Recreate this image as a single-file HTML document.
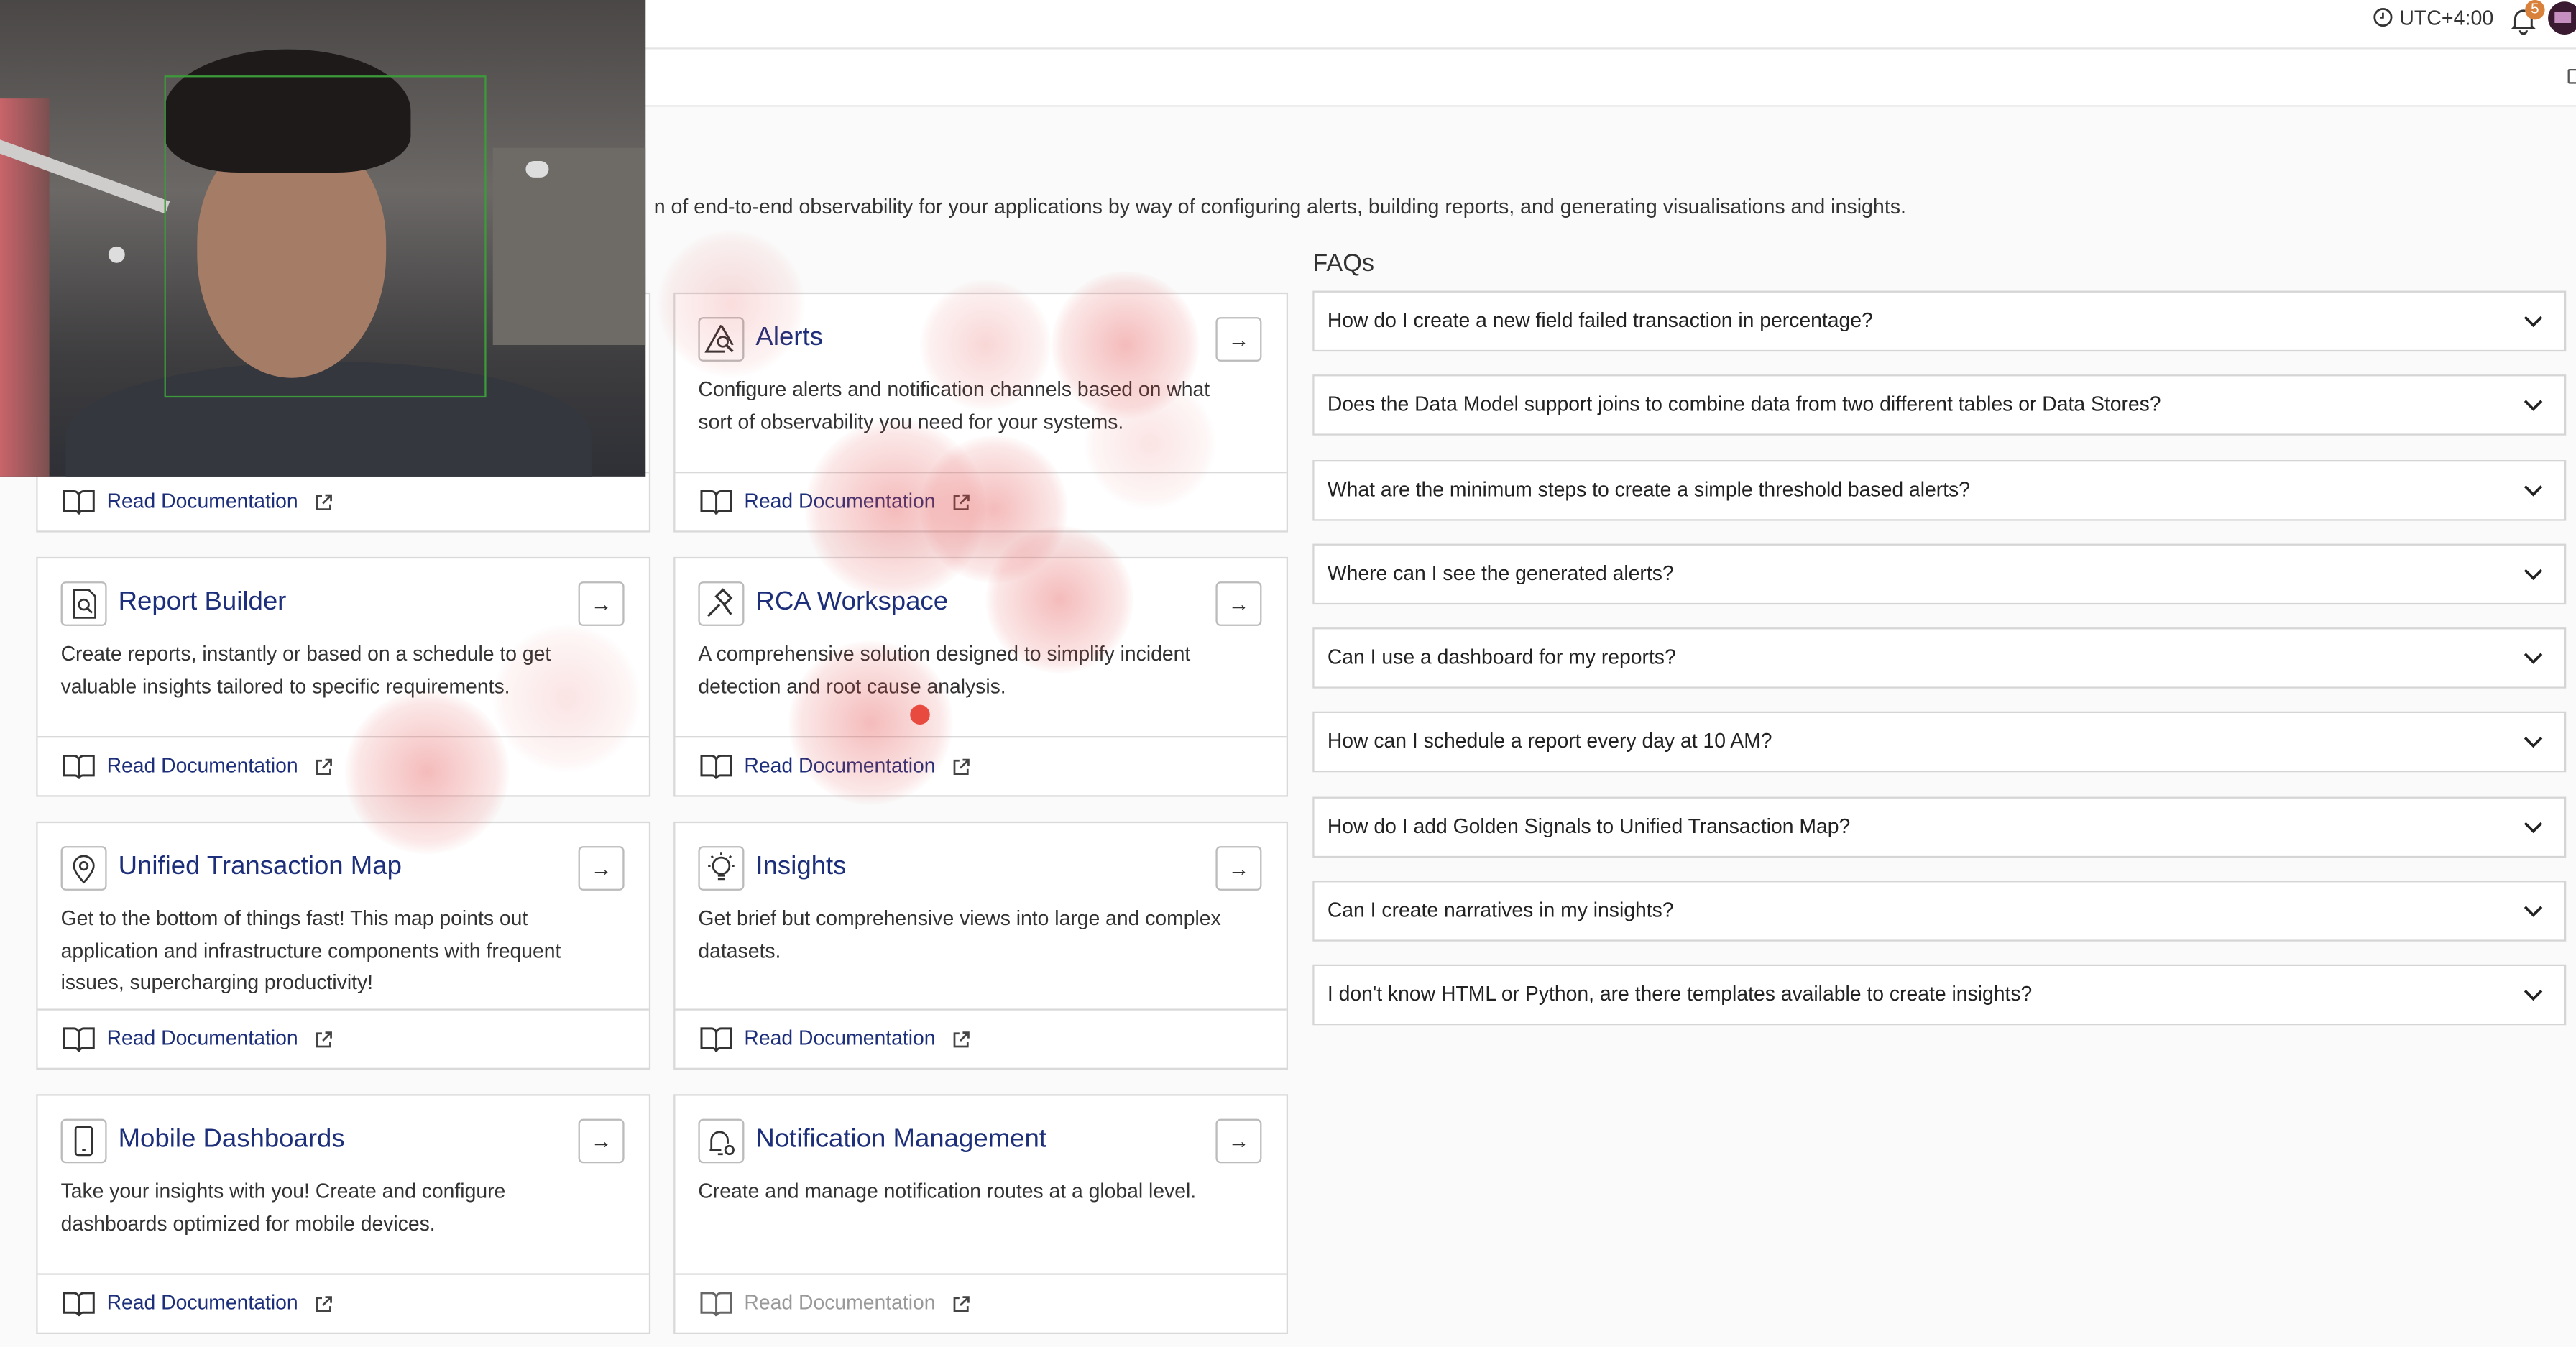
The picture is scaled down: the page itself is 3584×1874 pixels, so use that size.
<!DOCTYPE html>
<html><head><meta charset="utf-8">
<style>
*{box-sizing:border-box;margin:0;padding:0}
html,body{width:3584px;height:1874px;overflow:hidden;background:#fafafa}
#w{position:absolute;left:0;top:0;width:1568px;height:820px;transform:scale(2.28571);transform-origin:0 0;font-family:"Liberation Sans",sans-serif;color:#333;background:#fafafa}
.top{position:absolute;left:0;top:0;width:1568px;height:30px;background:#fff;border-bottom:1.5px solid #e4e4e4}
.sub{position:absolute;left:0;top:30px;width:1568px;height:35px;background:#fff;border-bottom:1.5px solid #e6e6e6}
.card{position:absolute;width:374px;background:#fff;border:1px solid #d9d9d9}
.card .ic{position:absolute;left:14px;top:14px;width:28px;height:27px;border:1px solid #bbb;border-radius:3px;background:#fff}
.card .t{position:absolute;left:49px;top:18px;font-size:16px;color:#1d2f7a}
.card .ar{position:absolute;right:15px;top:14px;width:28px;height:27px;border:1px solid #bbb;border-radius:3px;text-align:center;line-height:25px;font-size:13px;color:#333}
.card .d{position:absolute;left:14px;top:49px;right:30px;font-size:12.4px;line-height:19.5px;color:#333}
.card .f{position:absolute;left:0;right:0;bottom:0;height:36px;border-top:1px solid #d9d9d9}
.card .f .bk{position:absolute;left:15px;top:9px}
.card .f span{position:absolute;left:42px;top:10px;font-size:12.4px;color:#1d2f7a}
.card .f .ex{position:absolute;left:168px;top:12px}
.faq{position:absolute;left:799px;width:763px;height:37px;background:#fff;border:1px solid #d5d5d5;font-size:12.4px;color:#222;padding:10px 0 0 8px}
.faq svg{position:absolute;right:12px;top:13px}
.blob{position:absolute;border-radius:50%;background:radial-gradient(circle,rgba(225,60,60,.35),rgba(225,60,60,.12) 60%,rgba(225,60,60,0) 72%)}
</style></head><body><div id="w">
<div class="top"></div>
<div style="position:absolute;left:1444px;top:4px;font-size:12.5px;color:#333">
<svg width="13" height="13" viewBox="0 0 14 14" style="vertical-align:-2px"><circle cx="7" cy="7" r="5.5" fill="none" stroke="#333" stroke-width="1.3"/><path d="M7 4v3.2H5" fill="none" stroke="#333" stroke-width="1.3"/></svg> UTC+4:00</div>
<svg style="position:absolute;left:1528px;top:4px" width="16" height="17" viewBox="0 0 16 17"><path d="M3 12V7.5a5 5 0 0 1 10 0V12l1 1H2z M6 14.5a2 2 0 0 0 4 0" fill="none" stroke="#333" stroke-width="1.3"/></svg>
<div style="position:absolute;left:1537px;top:0;width:12px;height:12px;border-radius:6px;background:#d9813b;color:#fff;font-size:9px;text-align:center;line-height:11px">5</div>
<div style="position:absolute;left:1551px;top:1px;width:20px;height:20px;border-radius:10px;background:#3a1a30;overflow:hidden"><div style="margin:6px 0 0 4px;width:10px;height:7px;background:#c58fc0"></div></div>
<div class="sub"></div>
<div style="position:absolute;left:1563px;top:42px;width:6px;height:9px;border:1.3px solid #555;border-radius:1px"></div>

<div style="position:absolute;left:398px;top:119px;font-size:12.5px;color:#333;white-space:nowrap">n of end-to-end observability for your applications by way of configuring alerts, building reports, and generating visualisations and insights.</div>

<div class="card" style="left:22px;top:178px;height:146px"><div class="f"><svg class="bk" width="20" height="18" viewBox="0 0 20 18"><path d="M1 2h6a3 3 0 0 1 3 3v11a2.5 2.5 0 0 0-2.5-2H1z M19 2h-6a3 3 0 0 0-3 3v11a2.5 2.5 0 0 1 2.5-2H19z" fill="none" stroke="#333" stroke-width="1.3"/></svg><span>Read Documentation</span><svg class="ex" width="12" height="12" viewBox="0 0 12 12"><path d="M5 2H2v8h8V7 M7 1.5h3.5V5 M10.5 1.5 5.5 6.5" fill="none" stroke="#444" stroke-width="1.2"/></svg></div></div>
<div class="card" style="left:410px;top:178px;height:146px"><div class="ic"><svg width="26" height="25" viewBox="0 0 26 25"><path d="M13 4 4 20h11 M13 4l7 12" fill="none" stroke="#333" stroke-width="1.3"/><circle cx="14" cy="14" r="3" fill="none" stroke="#333" stroke-width="1.2"/><path d="M16 16l4 4" stroke="#333" stroke-width="1.6"/></svg></div><div class="t">Alerts</div><div class="ar">→</div><div class="d">Configure alerts and notification channels based on what sort of observability you need for your systems.</div><div class="f"><svg class="bk" width="20" height="18" viewBox="0 0 20 18"><path d="M1 2h6a3 3 0 0 1 3 3v11a2.5 2.5 0 0 0-2.5-2H1z M19 2h-6a3 3 0 0 0-3 3v11a2.5 2.5 0 0 1 2.5-2H19z" fill="none" stroke="#333" stroke-width="1.3"/></svg><span>Read Documentation</span><svg class="ex" width="12" height="12" viewBox="0 0 12 12"><path d="M5 2H2v8h8V7 M7 1.5h3.5V5 M10.5 1.5 5.5 6.5" fill="none" stroke="#444" stroke-width="1.2"/></svg></div></div>

<div class="card" style="left:22px;top:339px;height:146px"><div class="ic"><svg width="26" height="25" viewBox="0 0 26 25"><path d="M7 4h9l4 4v13H7z" fill="none" stroke="#333" stroke-width="1.2"/><circle cx="13" cy="13" r="3" fill="none" stroke="#333" stroke-width="1.2"/><path d="M15 15l3 3" stroke="#333" stroke-width="1.3"/></svg></div><div class="t">Report Builder</div><div class="ar">→</div><div class="d">Create reports, instantly or based on a schedule to get valuable insights tailored to specific requirements.</div><div class="f"><svg class="bk" width="20" height="18" viewBox="0 0 20 18"><path d="M1 2h6a3 3 0 0 1 3 3v11a2.5 2.5 0 0 0-2.5-2H1z M19 2h-6a3 3 0 0 0-3 3v11a2.5 2.5 0 0 1 2.5-2H19z" fill="none" stroke="#333" stroke-width="1.3"/></svg><span>Read Documentation</span><svg class="ex" width="12" height="12" viewBox="0 0 12 12"><path d="M5 2H2v8h8V7 M7 1.5h3.5V5 M10.5 1.5 5.5 6.5" fill="none" stroke="#444" stroke-width="1.2"/></svg></div></div>
<div class="card" style="left:410px;top:339px;height:146px"><div class="ic"><svg width="26" height="25" viewBox="0 0 26 25"><path d="M5 20l7-7 M10 8l4-4 5 5-4 4z M14 12l5 7" fill="none" stroke="#333" stroke-width="1.4"/></svg></div><div class="t">RCA Workspace</div><div class="ar">→</div><div class="d">A comprehensive solution designed to simplify incident detection and root cause analysis.</div><div class="f"><svg class="bk" width="20" height="18" viewBox="0 0 20 18"><path d="M1 2h6a3 3 0 0 1 3 3v11a2.5 2.5 0 0 0-2.5-2H1z M19 2h-6a3 3 0 0 0-3 3v11a2.5 2.5 0 0 1 2.5-2H19z" fill="none" stroke="#333" stroke-width="1.3"/></svg><span>Read Documentation</span><svg class="ex" width="12" height="12" viewBox="0 0 12 12"><path d="M5 2H2v8h8V7 M7 1.5h3.5V5 M10.5 1.5 5.5 6.5" fill="none" stroke="#444" stroke-width="1.2"/></svg></div></div>

<div class="card" style="left:22px;top:500px;height:151px"><div class="ic"><svg width="26" height="25" viewBox="0 0 26 25"><path d="M13 21s-6-6-6-10a6 6 0 0 1 12 0c0 4-6 10-6 10z" fill="none" stroke="#333" stroke-width="1.2"/><circle cx="13" cy="11" r="2.3" fill="none" stroke="#333" stroke-width="1.2"/></svg></div><div class="t">Unified Transaction Map</div><div class="ar">→</div><div class="d">Get to the bottom of things fast! This map points out application and infrastructure components with frequent issues, supercharging productivity!</div><div class="f"><svg class="bk" width="20" height="18" viewBox="0 0 20 18"><path d="M1 2h6a3 3 0 0 1 3 3v11a2.5 2.5 0 0 0-2.5-2H1z M19 2h-6a3 3 0 0 0-3 3v11a2.5 2.5 0 0 1 2.5-2H19z" fill="none" stroke="#333" stroke-width="1.3"/></svg><span>Read Documentation</span><svg class="ex" width="12" height="12" viewBox="0 0 12 12"><path d="M5 2H2v8h8V7 M7 1.5h3.5V5 M10.5 1.5 5.5 6.5" fill="none" stroke="#444" stroke-width="1.2"/></svg></div></div>
<div class="card" style="left:410px;top:500px;height:151px"><div class="ic"><svg width="26" height="25" viewBox="0 0 26 25"><circle cx="13" cy="11" r="5" fill="none" stroke="#333" stroke-width="1.2"/><path d="M11 17h4 M11 19h4 M13 3v1.5 M5 11h1.5 M19.5 11H21 M7 5l1 1 M19 5l-1 1" fill="none" stroke="#333" stroke-width="1.2"/></svg></div><div class="t">Insights</div><div class="ar">→</div><div class="d">Get brief but comprehensive views into large and complex datasets.</div><div class="f"><svg class="bk" width="20" height="18" viewBox="0 0 20 18"><path d="M1 2h6a3 3 0 0 1 3 3v11a2.5 2.5 0 0 0-2.5-2H1z M19 2h-6a3 3 0 0 0-3 3v11a2.5 2.5 0 0 1 2.5-2H19z" fill="none" stroke="#333" stroke-width="1.3"/></svg><span>Read Documentation</span><svg class="ex" width="12" height="12" viewBox="0 0 12 12"><path d="M5 2H2v8h8V7 M7 1.5h3.5V5 M10.5 1.5 5.5 6.5" fill="none" stroke="#444" stroke-width="1.2"/></svg></div></div>

<div class="card" style="left:22px;top:666px;height:146px"><div class="ic"><svg width="26" height="25" viewBox="0 0 26 25"><rect x="8" y="4" width="10" height="17" rx="1.5" fill="none" stroke="#333" stroke-width="1.2"/><path d="M12 18h2" stroke="#333" stroke-width="1.2"/></svg></div><div class="t">Mobile Dashboards</div><div class="ar">→</div><div class="d">Take your insights with you! Create and configure dashboards optimized for mobile devices.</div><div class="f"><svg class="bk" width="20" height="18" viewBox="0 0 20 18"><path d="M1 2h6a3 3 0 0 1 3 3v11a2.5 2.5 0 0 0-2.5-2H1z M19 2h-6a3 3 0 0 0-3 3v11a2.5 2.5 0 0 1 2.5-2H19z" fill="none" stroke="#333" stroke-width="1.3"/></svg><span>Read Documentation</span><svg class="ex" width="12" height="12" viewBox="0 0 12 12"><path d="M5 2H2v8h8V7 M7 1.5h3.5V5 M10.5 1.5 5.5 6.5" fill="none" stroke="#444" stroke-width="1.2"/></svg></div></div>
<div class="card" style="left:410px;top:666px;height:146px"><div class="ic"><svg width="26" height="25" viewBox="0 0 26 25"><path d="M7 18V12a5 5 0 0 1 10 0v2 M6 18h7 M11 20.5h3" fill="none" stroke="#333" stroke-width="1.2"/><circle cx="18" cy="18" r="2.5" fill="none" stroke="#333" stroke-width="1.2"/></svg></div><div class="t">Notification Management</div><div class="ar">→</div><div class="d">Create and manage notification routes at a global level.</div><div class="f"><svg class="bk" width="20" height="18" viewBox="0 0 20 18"><path d="M1 2h6a3 3 0 0 1 3 3v11a2.5 2.5 0 0 0-2.5-2H1z M19 2h-6a3 3 0 0 0-3 3v11a2.5 2.5 0 0 1 2.5-2H19z" fill="none" stroke="#666" stroke-width="1.3"/></svg><span style="color:#999">Read Documentation</span><svg class="ex" width="12" height="12" viewBox="0 0 12 12"><path d="M5 2H2v8h8V7 M7 1.5h3.5V5 M10.5 1.5 5.5 6.5" fill="none" stroke="#444" stroke-width="1.2"/></svg></div></div>

<div style="position:absolute;left:799px;top:152px;font-size:15px;color:#333">FAQs</div>
<div class="faq" style="top:177px">How do I create a new field failed transaction in percentage?<svg width="14" height="9" viewBox="0 0 14 9"><path d="M2 2l5 5 5-5" fill="none" stroke="#222" stroke-width="1.6"/></svg></div>
<div class="faq" style="top:228px">Does the Data Model support joins to combine data from two different tables or Data Stores?<svg width="14" height="9" viewBox="0 0 14 9"><path d="M2 2l5 5 5-5" fill="none" stroke="#222" stroke-width="1.6"/></svg></div>
<div class="faq" style="top:280px">What are the minimum steps to create a simple threshold based alerts?<svg width="14" height="9" viewBox="0 0 14 9"><path d="M2 2l5 5 5-5" fill="none" stroke="#222" stroke-width="1.6"/></svg></div>
<div class="faq" style="top:331px">Where can I see the generated alerts?<svg width="14" height="9" viewBox="0 0 14 9"><path d="M2 2l5 5 5-5" fill="none" stroke="#222" stroke-width="1.6"/></svg></div>
<div class="faq" style="top:382px">Can I use a dashboard for my reports?<svg width="14" height="9" viewBox="0 0 14 9"><path d="M2 2l5 5 5-5" fill="none" stroke="#222" stroke-width="1.6"/></svg></div>
<div class="faq" style="top:433px">How can I schedule a report every day at 10 AM?<svg width="14" height="9" viewBox="0 0 14 9"><path d="M2 2l5 5 5-5" fill="none" stroke="#222" stroke-width="1.6"/></svg></div>
<div class="faq" style="top:485px">How do I add Golden Signals to Unified Transaction Map?<svg width="14" height="9" viewBox="0 0 14 9"><path d="M2 2l5 5 5-5" fill="none" stroke="#222" stroke-width="1.6"/></svg></div>
<div class="faq" style="top:536px">Can I create narratives in my insights?<svg width="14" height="9" viewBox="0 0 14 9"><path d="M2 2l5 5 5-5" fill="none" stroke="#222" stroke-width="1.6"/></svg></div>
<div class="faq" style="top:587px">I don't know HTML or Python, are there templates available to create insights?<svg width="14" height="9" viewBox="0 0 14 9"><path d="M2 2l5 5 5-5" fill="none" stroke="#222" stroke-width="1.6"/></svg></div>

<div class="blob" style="left:640px;top:165px;width:90px;height:90px"></div>
<div class="blob" style="left:560px;top:170px;width:80px;height:80px;opacity:.6"></div>
<div class="blob" style="left:490px;top:255px;width:110px;height:110px"></div>
<div class="blob" style="left:560px;top:265px;width:90px;height:90px"></div>
<div class="blob" style="left:600px;top:320px;width:90px;height:90px"></div>
<div class="blob" style="left:480px;top:390px;width:100px;height:100px"></div>
<div class="blob" style="left:210px;top:420px;width:100px;height:100px"></div>
<div class="blob" style="left:400px;top:140px;width:90px;height:90px;opacity:.5"></div>
<div class="blob" style="left:300px;top:380px;width:90px;height:90px;opacity:.4"></div>
<div class="blob" style="left:660px;top:230px;width:80px;height:80px;opacity:.4"></div>
<div style="position:absolute;left:554px;top:429px;width:12px;height:12px;border-radius:6px;background:#e84a3f"></div>

<div style="position:absolute;left:0;top:0;width:393px;height:290px;overflow:hidden;background:linear-gradient(180deg,#4a4746 0%,#6b6866 40%,#3e3d3f 75%,#2e3036 100%)">
<div style="position:absolute;left:0;top:60px;width:30px;height:230px;background:linear-gradient(90deg,#c9646a,#7a5050)"></div>
<div style="position:absolute;left:0;top:85px;width:110px;height:8px;background:#cfcdcb;transform:rotate(20deg);transform-origin:0 0"></div>
<div style="position:absolute;left:300px;top:90px;width:93px;height:120px;background:#6e6a66"></div>
<div style="position:absolute;left:40px;top:220px;width:320px;height:90px;border-radius:50% 50% 0 0;background:#34373e"></div>
<div style="position:absolute;left:120px;top:80px;width:115px;height:150px;border-radius:45% 45% 50% 50%;background:#a57c66"></div>
<div style="position:absolute;left:100px;top:30px;width:150px;height:75px;border-radius:50% 50% 30% 30%;background:#1e1a19"></div>
<div style="position:absolute;left:100px;top:46px;width:196px;height:196px;border:1.5px solid #3c9a3a"></div>
<div style="position:absolute;left:320px;top:98px;width:14px;height:10px;border-radius:7px;background:#ddd"></div>
<div style="position:absolute;left:66px;top:150px;width:10px;height:10px;border-radius:5px;background:#ddd"></div>
</div>
</div></body></html>
